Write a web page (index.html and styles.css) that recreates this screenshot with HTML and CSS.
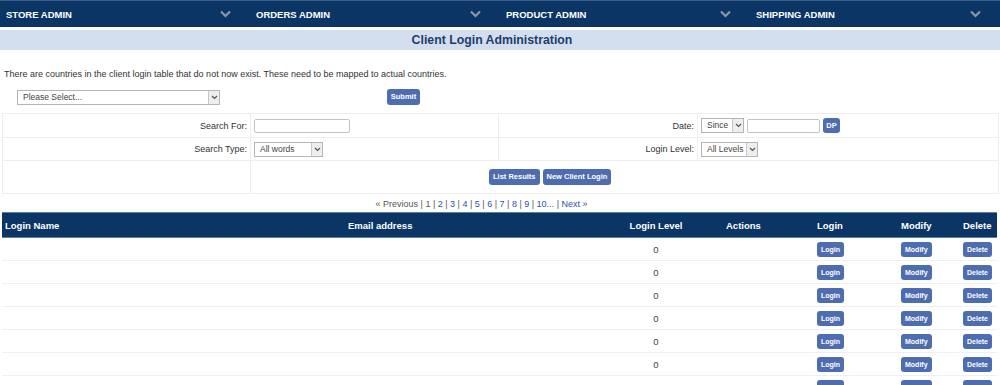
FILE: index.html
```html
<!DOCTYPE html>
<html>
<head>
<meta charset="utf-8">
<link rel="stylesheet" href="styles.css">
</head>
<body>
<nav class="topnav">
  <div class="navitem"><span>STORE ADMIN</span><svg class="chev" width="11" height="8" viewBox="0 0 11 8"><path d="M1 1.5 L5.5 6 L10 1.5" fill="none" stroke="#8c97a8" stroke-width="2.2"/></svg></div>
  <div class="navitem"><span>ORDERS ADMIN</span><svg class="chev" width="11" height="8" viewBox="0 0 11 8"><path d="M1 1.5 L5.5 6 L10 1.5" fill="none" stroke="#8c97a8" stroke-width="2.2"/></svg></div>
  <div class="navitem"><span>PRODUCT ADMIN</span><svg class="chev" width="11" height="8" viewBox="0 0 11 8"><path d="M1 1.5 L5.5 6 L10 1.5" fill="none" stroke="#8c97a8" stroke-width="2.2"/></svg></div>
  <div class="navitem"><span>SHIPPING ADMIN</span><svg class="chev" width="11" height="8" viewBox="0 0 11 8"><path d="M1 1.5 L5.5 6 L10 1.5" fill="none" stroke="#8c97a8" stroke-width="2.2"/></svg></div>
</nav>
<h1 class="title">Client Login Administration</h1>
<p class="notice">There are countries in the client login table that do not now exist. These need to be mapped to actual countries.</p>
<div class="maprow">
  <span class="sel sel-country"><span class="seltext">Please Select...</span><span class="selarrow"><svg width="7" height="5" viewBox="0 0 7 5"><path d="M1 1 L3.5 3.5 L6 1" fill="none" stroke="#555" stroke-width="1.2"/></svg></span></span>
  <button class="btn btn-submit">Submit</button>
</div>
<table class="search">
  <colgroup><col class="c1"><col class="c2"><col class="c3"><col class="c4"></colgroup>
  <tr class="r1">
    <td class="lbl">Search For:</td>
    <td><input class="txt txt-search" type="text"></td>
    <td class="lbl">Date:</td>
    <td><span class="sel sel-since"><span class="seltext">Since</span><span class="selarrow"><svg width="7" height="5" viewBox="0 0 7 5"><path d="M1 1 L3.5 3.5 L6 1" fill="none" stroke="#555" stroke-width="1.2"/></svg></span></span><input class="txt txt-date" type="text"><button class="btn btn-dp">DP</button></td>
  </tr>
  <tr class="r2">
    <td class="lbl">Search Type:</td>
    <td><span class="sel sel-type"><span class="seltext">All words</span><span class="selarrow"><svg width="7" height="5" viewBox="0 0 7 5"><path d="M1 1 L3.5 3.5 L6 1" fill="none" stroke="#555" stroke-width="1.2"/></svg></span></span></td>
    <td class="lbl">Login Level:</td>
    <td><span class="sel sel-level"><span class="seltext">All Levels</span><span class="selarrow"><svg width="7" height="5" viewBox="0 0 7 5"><path d="M1 1 L3.5 3.5 L6 1" fill="none" stroke="#555" stroke-width="1.2"/></svg></span></span></td>
  </tr>
  <tr class="r3">
    <td></td>
    <td colspan="3" class="actions"><button class="btn">List Results</button><button class="btn">New Client Login</button></td>
  </tr>
</table>
<div class="pager">
  <span class="dim">&laquo; Previous</span> | <span class="cur">1</span> | <a>2</a> | <a>3</a> | <a>4</a> | <a>5</a> | <a>6</a> | <a>7</a> | <a>8</a> | <a>9</a> | <a>10...</a> | <a>Next &raquo;</a>
</div>
<table class="data">
  <colgroup><col class="d1"><col class="d2"><col class="d3"><col class="d4"><col class="d5"><col class="d6"><col class="d7"></colgroup>
  <thead>
    <tr><th>Login Name</th><th>Email address</th><th class="ctr">Login Level</th><th class="act">Actions</th><th>Login</th><th>Modify</th><th>Delete</th></tr>
  </thead>
  <tbody>
    <tr><td></td><td></td><td class="ctr">0</td><td></td><td><button class="btn sm">Login</button></td><td><button class="btn sm">Modify</button></td><td><button class="btn sm">Delete</button></td></tr>
    <tr><td></td><td></td><td class="ctr">0</td><td></td><td><button class="btn sm">Login</button></td><td><button class="btn sm">Modify</button></td><td><button class="btn sm">Delete</button></td></tr>
    <tr><td></td><td></td><td class="ctr">0</td><td></td><td><button class="btn sm">Login</button></td><td><button class="btn sm">Modify</button></td><td><button class="btn sm">Delete</button></td></tr>
    <tr><td></td><td></td><td class="ctr">0</td><td></td><td><button class="btn sm">Login</button></td><td><button class="btn sm">Modify</button></td><td><button class="btn sm">Delete</button></td></tr>
    <tr><td></td><td></td><td class="ctr">0</td><td></td><td><button class="btn sm">Login</button></td><td><button class="btn sm">Modify</button></td><td><button class="btn sm">Delete</button></td></tr>
    <tr><td></td><td></td><td class="ctr">0</td><td></td><td><button class="btn sm">Login</button></td><td><button class="btn sm">Modify</button></td><td><button class="btn sm">Delete</button></td></tr>
    <tr><td></td><td></td><td class="ctr">0</td><td></td><td><button class="btn sm">Login</button></td><td><button class="btn sm">Modify</button></td><td><button class="btn sm">Delete</button></td></tr>
  </tbody>
</table>
</body>
</html>
```

FILE: styles.css
```css
* { box-sizing: border-box; }
html, body { margin: 0; padding: 0; background: #fff; }
body {
  font-family: "Liberation Sans", Arial, sans-serif;
  font-size: 9px;
  color: #333;
  overflow: hidden;
  height: 385px;
}
.topnav {
  display: flex;
  height: 27px;
  background: #0a3565;
  border-top: 1px solid #3a5f8c;
}
.navitem {
  flex: 0 0 250px;
  display: flex;
  align-items: center;
  justify-content: space-between;
  padding: 0 19px 0 6px;
  color: #fff;
  font-weight: bold;
  font-size: 9.5px;
}
.navitem .chev { display: block; }
.title {
  margin: 3px 0 0;
  padding-right: 16px;
  height: 20px;
  line-height: 20px;
  background: #d3dfee;
  color: #1d3e6d;
  font-size: 12.3px;
  font-weight: bold;
  text-align: center;
}
.notice {
  margin: 18px 0 0 4px;
  font-size: 9px;
  line-height: 12px;
}
.maprow {
  display: flex;
  align-items: center;
  margin-top: 9px;
  padding-left: 17px;
  height: 16px;
}
.sel {
  display: inline-flex;
  align-items: stretch;
  height: 15px;
  border: 1px solid #b5b5b5;
  background: #fff;
  font-size: 8.5px;
  color: #444;
  vertical-align: middle;
}
.seltext {
  flex: 1;
  padding-left: 5px;
  line-height: 13px;
  white-space: nowrap;
  overflow: hidden;
}
.selarrow {
  width: 11px;
  border-left: 1px solid #c8c8c8;
  background: #eee;
  display: flex;
  align-items: center;
  justify-content: center;
}
.sel-country { width: 203px; }
.sel-type { width: 69px; }
.sel-since { width: 43px; }
.sel-level { width: 57px; }
.btn {
  display: inline-block;
  border: none;
  border-radius: 3px;
  background: #4e6db0;
  color: #fff;
  font-family: "Liberation Sans", Arial, sans-serif;
  font-weight: bold;
  font-size: 7.5px;
  height: 16px;
  line-height: 16px;
  padding: 0 4px;
  vertical-align: middle;
  cursor: pointer;
}
.btn-submit { margin-left: 167px; width: 33px; padding: 0; }
.search {
  margin: 8px 0 0 2px;
  width: 996px;
  border-collapse: collapse;
  table-layout: fixed;
}
.search td {
  border: 1px solid #eeeeee;
  padding: 0 3px;
  font-size: 9px;
}
.search .c1 { width: 248px; }
.search .c2 { width: 248px; }
.search .c3 { width: 199px; }
.search .c4 { width: 301px; }
.search .r1 td { height: 24px; }
.search .r2 td { height: 23px; }
.search .r3 td { height: 33px; }
.search td.lbl { text-align: right; padding-right: 3px; }
.txt {
  height: 14px;
  border: 1px solid #c4c4c4;
  border-radius: 2px;
  vertical-align: middle;
  padding: 0 3px;
  font-size: 9px;
}
.txt-search { width: 96px; }
.txt-date { width: 73px; margin-left: 3px; }
.btn-dp { margin-left: 3px; width: 17px; padding: 0; font-size: 7.5px; height: 15px; line-height: 15px; }
.search td.actions { padding-left: 238px; }
.search td.actions .btn { margin-right: 3px; }
.pager {
  text-align: center;
  margin-top: 4px;
  padding-right: 37px;
  height: 14px;
  line-height: 12px;
  font-size: 9px;
  color: #555;
}
.pager a { color: #2a52be; }
.pager .dim { color: #555; }
.data {
  margin-left: 2px;
  width: 995px;
  border-collapse: collapse;
  table-layout: fixed;
}
.data .d1 { width: 343px; }
.data .d2 { width: 255px; }
.data .d3 { width: 112px; }
.data .d4 { width: 102px; }
.data .d5 { width: 84px; }
.data .d6 { width: 62px; }
.data .d7 { width: 37px; }
.data th {
  background: #0a3565;
  color: #fff;
  font-size: 9.5px;
  font-weight: bold;
  text-align: left;
  height: 25px;
  padding: 0 3px;
  border-top: 1px solid #5d7da3;
  border-bottom: 1px solid #5d7da3;
  white-space: nowrap;
}
.data th.act { padding-left: 14px; }
.data .ctr { text-align: center; }
.data td {
  height: 23px;
  padding: 0 3px;
  border-bottom: 1px solid #eef0f6;
  font-size: 9.5px;
  color: #444;
}
.data td.ctr { color: #444; }
.btn.sm {
  font-size: 7px;
  height: 15px;
  line-height: 15px;
  padding: 0 4px;
}
```
